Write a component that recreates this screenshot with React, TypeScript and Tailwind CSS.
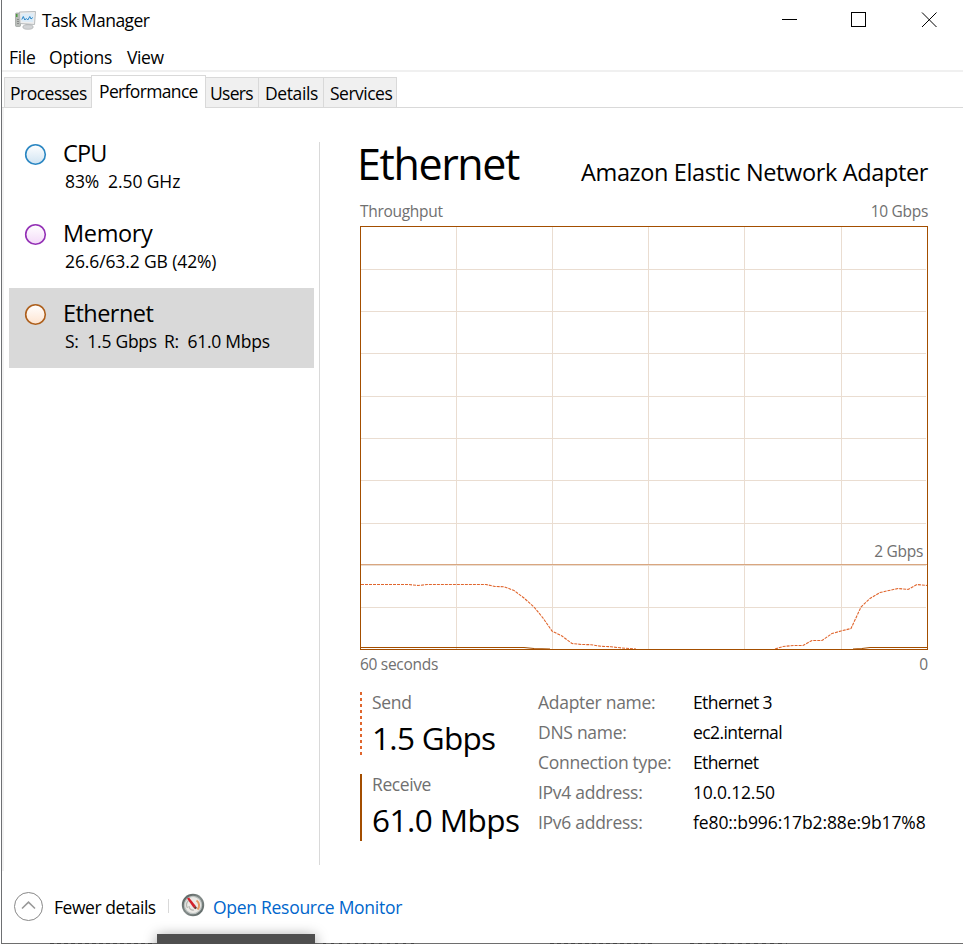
import React from "react";

const tabs = [
  { name: "Processes", box: "w-[87px] pl-[5px] h-[31px] border-r-0", text: "mt-[-1px] tracking-[-0.5px]" },
  { name: "Performance", box: "w-[115px] pl-[7px] h-[33px] border-b-0 bg-white", text: "tracking-[-0.65px] mt-[-1px]" },
  { name: "Users", box: "w-[53px] pl-[4px] h-[31px] border-l-0", text: "mt-[-1px] tracking-[-0.7px]" },
  { name: "Details", box: "w-[65px] pl-[6px] h-[31px] border-l-0", text: "mt-[-1px] tracking-[-0.4px]" },
  { name: "Services", box: "w-[73px] pl-[6px] h-[31px] border-l-0", text: "mt-[-1px] tracking-[-0.5px]" },
];

const details = [
  { label: "Adapter name:", value: "Ethernet 3", fit: "tracking-[-0.6px]" },
  { label: "DNS name:", value: "ec2.internal", fit: "tracking-[-0.58px]" },
  { label: "Connection type:", value: "Ethernet", fit: "tracking-[-0.65px]" },
  { label: "IPv4 address:", value: "10.0.12.50", fit: "tracking-[-0.2px]" },
  { label: "IPv6 address:", value: "fe80::b996:17b2:88e:9b17%8", fit: "tracking-[-0.1px]" },
];

function TaskIcon() {
  return (
    <svg width="22" height="20" viewBox="0 0 22 20">
      <rect x="0.5" y="3" width="5" height="13.500" rx="1" fill="#b9bdb9" stroke="#8f9490" strokeWidth=".6" />
      <rect x="1" y="4" width="1.500" height="3" fill="#4c9b3c" />
      <path d="M2 9.500h2M2 11.500h2M2 13.500h2" stroke="#777" strokeWidth=".7" />
      <path d="M4.500 2 20.500 1.500 19.500 14.500 5 13.500z" fill="#eeeeee" stroke="#b0b4b7" strokeWidth=".9" />
      <path d="M6.300 3.700 18.800 3.300 18.200 12.300 6.600 11.600z" fill="#dcecf8" />
      <path d="M6.800 9.500 8.300 6.500l1.500 3.500L11.300 8.500l1.500 1.500 2-3.500 1.200 2.500 1.800-1.500" fill="none" stroke="#2784c6" strokeWidth="1" />
      <path d="M10.500 14h5v2.500h-5z" fill="#c3c6c8" />
      <ellipse cx="13" cy="17" rx="5.200" ry="2.300" fill="#d2d4d6" stroke="#a4a7a9" strokeWidth=".6" />
    </svg>
  );
}

function Gauge() {
  return (
    <svg width="24" height="24" viewBox="0 0 24 24">
      <defs>
        <linearGradient id="rim" x1="0" y1="0" x2="1" y2="1">
          <stop offset="0" stopColor="#4f5856" />
          <stop offset=".5" stopColor="#848c8a" />
          <stop offset="1" stopColor="#566160" />
        </linearGradient>
      </defs>
      <circle cx="12" cy="12" r="11.200" fill="url(#rim)" />
      <circle cx="12" cy="12" r="8.600" fill="#eceae6" stroke="#bcc2c0" strokeWidth="1.200" />
      <path d="M6.500 15a6 6 0 0 1 1-7.500" fill="none" stroke="#b5b5b0" strokeWidth="1.300" />
      <path d="M15.500 7.500a6 6 0 0 1 1 9" fill="none" stroke="#e39a64" strokeWidth="2" />
      <path d="M8 13a4 4 0 0 0 5 4" fill="none" stroke="#b5b5b0" strokeWidth="1.200" />
      <path d="M6 5.500 8 4.500 14.800 13 12.500 14.800z" fill="#d3212b" />
      <path d="m12.600 14.700 2.100-1.600 1.300 1.800-1.800 1.300z" fill="#6b3131" />
    </svg>
  );
}

function Resource({ name, info, color, fill, selected, nameClass, infoClass }: {
  name: string; info: string[]; color: string; fill: string; selected?: boolean; nameClass: string; infoClass: string;
}) {
  return (
    <div className={`flex h-20 w-[305px] ${selected ? "bg-[#d9d9d9]" : ""}`}>
      <svg className="mt-[15px] ml-[15px] shrink-0" width="23" height="23" viewBox="0 0 23 23">
        <defs>
          <linearGradient id={name} x1="0" y1="0" x2="0" y2="1">
            <stop offset="0" stopColor="#fff" />
            <stop offset="1" stopColor={fill} />
          </linearGradient>
        </defs>
        <circle cx="11.500" cy="11.500" r="9.800" fill={`url(#${name})`} stroke={color} strokeWidth="1.600" />
      </svg>
      <div className="ml-4 whitespace-pre">
        <div className={`mt-[9px] h-8 text-[23.5px] leading-8 ${nameClass}`}>{name}</div>
        <div className={`ml-[2px] flex h-6 text-[17.5px] leading-6 ${infoClass}`}>
          {info.map((s) => <span key={s}>{s}</span>)}
        </div>
      </div>
    </div>
  );
}

function Chart() {
  return (
    <svg className="block" width="568" height="424" viewBox="360 226 568 424" shapeRendering="crispEdges">
      <g stroke="#eaddd1" strokeWidth="1">
        {[456, 552, 648, 744, 841].map((x) => <path key={x} d={`M${x + 0.5} 227V649`} />)}
        {[269, 311, 353, 396, 438, 480, 523, 565, 607].map((y) => <path key={y} d={`M361 ${y + 0.5}H926`} />)}
      </g>
      <path d="M361 564.500H927" stroke="#d9a680" />
      <g fill="none" shapeRendering="auto">
        <path
          d="M361 584.500H409L418 585.500 427 584.500H486L495 586.500 504 586.700 514 590.500 524 598 534 607 543 618 552 631 562 636 572 643.500 582 644.500 591 644.700 601 646.300 611 646.700 620 647.800 636 649M775 649 783 646.500 794 645.500H803L812 640.500H822L832 633.500 841 631 851 628.500 861 607 870 598.500 880 592.500 898 588.500 908 589.500 917 584.500 927 585.500"
          stroke="#e0662e" strokeWidth="1.100" strokeDasharray="3 1"
        />
        <path d="M361 647.500H524L534 648.500 550 649M853 649 862 648.500 870 647.500H927" stroke="#a34e00" strokeWidth="1.100" />
      </g>
      <rect x="360.500" y="226.500" width="567" height="423" fill="none" stroke="#a34e00" />
    </svg>
  );
}

export default function App() {
  return (
    <div className="relative flex h-[944px] w-[963px] flex-col overflow-hidden bg-white pl-px font-['Open_Sans',sans-serif] text-[17.5px] text-black">
      <div className="flex h-[943px] flex-col border-l border-[#6e7073]">
        <header className="flex h-10 shrink-0 items-start">
          <div className="mt-[10px] ml-[13px]"><TaskIcon /></div>
          <div className="mt-[8px] ml-[5px] leading-6 tracking-[-0.53px]">Task Manager</div>
          <svg className="mt-[12px] ml-auto mr-[25px]" width="157" height="16" viewBox="0 0 157 16" fill="none" stroke="#000">
            <path d="M1 7.500H16M70.500.500H84.500V14.500H70.500z" shapeRendering="crispEdges" />
            <path d="M141 .500 155.500 15M155.500.500 141 15" strokeWidth="1" />
          </svg>
        </header>
        <nav className="flex h-[32px] shrink-0 border-b-2 border-[#f0f0f0] pt-[5px] pl-[7px] leading-6">
          <span className="w-[40px] tracking-[-0.3px]">File</span>
          <span className="w-[78px] tracking-[-0.2px]">Options</span>
          <span className="tracking-[-0.4px]">View</span>
        </nav>
        <div className="flex h-9 shrink-0 items-end">
          <div className="w-[2px] shrink-0 border-b border-[#d9d9d9]" />
          {tabs.map((t) => (
            <div key={t.name} className={`shrink-0 border border-[#d9d9d9] bg-[#f0f0f0] pt-[4px] leading-6 ${t.box}`}>
              <div className={t.text}>{t.name}</div>
            </div>
          ))}
          <div className="flex-1 border-b border-[#d9d9d9]" />
        </div>

        <main className="flex h-[763px] shrink-0">
          <aside className="flex w-[317px] shrink-0 flex-col border-l-2 border-[#f3f3f3] pt-[20px] pl-[5px]">
            <Resource name="CPU" info={["83%  2.50 GHz"]} color="#2a86c2" fill="#cfe3f2" nameClass="tracking-[-0.8px]" infoClass="tracking-[-0.1px]" />
            <Resource name="Memory" info={["26.6/63.2 GB (42%)"]} color="#9330b5" fill="#f3d9f8" nameClass="tracking-[-0.35px]" infoClass="tracking-[-0.12px]" />
            <Resource name="Ethernet" info={["S:  1.5 Gbps", "R:  61.0 Mbps"]} color="#ad5f1c" fill="#fde3cf" selected nameClass="tracking-[-0.55px]" infoClass="gap-[7px] tracking-[-0.25px]" />
          </aside>
          <div className="mt-[34px] h-[723px] w-px bg-[#d9d9d9]" />
          <section className="ml-[40px] w-[568px]">
            <div className="flex h-[92px] items-start justify-between">
              <h1 className="mt-[26px] ml-[-3px] text-[43px] leading-[60px] tracking-[-1.4px]">Ethernet</h1>
              <h2 className="mt-[48px] text-[23.5px] leading-8 tracking-[-0.36px]">Amazon Elastic Network Adapter</h2>
            </div>
            <div className="flex h-[26px] justify-between text-[15.5px] leading-[22px] text-[#707070]">
              <span className="tracking-[-0.3px]">Throughput</span>
              <span className="tracking-[-0.3px]">10 Gbps</span>
            </div>
            <div className="relative">
              <Chart />
              <span className="absolute top-[314px] right-[5px] text-[15.5px] leading-[22px] tracking-[-0.3px] text-[#707070]">2 Gbps</span>
            </div>
            <div className="flex h-[42px] justify-between pt-[3px] text-[15.5px] leading-[22px] text-[#707070]">
              <span className="tracking-[-0.3px]">60 seconds</span>
              <span>0</span>
            </div>
            <div className="flex">
              <div className="flex w-[178px] shrink-0 flex-col whitespace-nowrap">
                <div className="flex h-[82px]">
                  <div className="h-[63px] w-[2px] bg-[repeating-linear-gradient(to_bottom,#e0662e_0_3px,transparent_3px_6px)]" />
                  <div className="ml-[10px]">
                    <div className="mt-[-2px] leading-6 tracking-[-0.3px] text-[#707070]">Send</div>
                    <div className="mt-[3px] text-[31.5px] leading-[42px] tracking-[-0.7px]">1.5 Gbps</div>
                  </div>
                </div>
                <div className="flex">
                  <div className="h-[67px] w-[2px] bg-[#a34e00]" />
                  <div className="ml-[10px]">
                    <div className="mt-[-2px] leading-6 tracking-[-0.4px] text-[#707070]">Receive</div>
                    <div className="mt-[3px] text-[31.5px] leading-[42px] tracking-[-0.55px]">61.0 Mbps</div>
                  </div>
                </div>
              </div>
              <dl className="mt-[-5px] leading-[30px] whitespace-nowrap">
                {details.map((d) => (
                  <div key={d.label} className="flex h-[30px]">
                    <dt className="w-[155px] tracking-[-0.28px] text-[#707070]">{d.label}</dt>
                    <dd className={d.fit}>{d.value}</dd>
                  </div>
                ))}
              </dl>
            </div>
          </section>
        </main>

        <footer className="flex h-[72px] shrink-0 items-start">
          <svg className="mt-[20px] ml-[12px]" width="30" height="30" viewBox="0 0 30 30" fill="none" stroke="#999">
            <circle cx="14.500" cy="15.500" r="14" stroke="#888" strokeWidth="1" />
            <path d="m8 17.500 6.500-6.300 6.500 6.300" strokeWidth="1.600" />
          </svg>
          <span className="mt-[24px] ml-[10px] w-[114px] leading-6 tracking-[-0.45px]">Fewer details</span>
          <div className="mt-[28px] h-[14px] w-px bg-[#d9d9d9]" />
          <div className="mt-[22px] ml-[12px]"><Gauge /></div>
          <span className="mt-[24px] ml-[8px] leading-6 tracking-[-0.28px] text-[#0066cc]">Open Resource Monitor</span>
        </footer>
      </div>
      <div className="flex h-px bg-[#6e6e6e]">
        <div className="ml-[49px] h-px w-[105px] bg-[repeating-linear-gradient(to_right,#444_0_4px,#6e6e6e_4px_7px)]" />
        <div className="ml-[168px] h-px w-[95px] bg-[repeating-linear-gradient(to_right,#444_0_3px,#6e6e6e_3px_8px)]" />
        <div className="ml-[132px] h-px w-[105px] bg-[repeating-linear-gradient(to_right,#444_0_4px,#6e6e6e_4px_7px)]" />
        <div className="ml-[35px] h-px w-[97px] bg-[repeating-linear-gradient(to_right,#444_0_4px,#6e6e6e_4px_8px)]" />
      </div>
      <div className="absolute top-[934px] left-[157px] h-[20px] w-[158px] bg-[#4f4f4f] shadow-[0_2px_14px_rgba(0,0,0,0.4)]" />
    </div>
  );
}
